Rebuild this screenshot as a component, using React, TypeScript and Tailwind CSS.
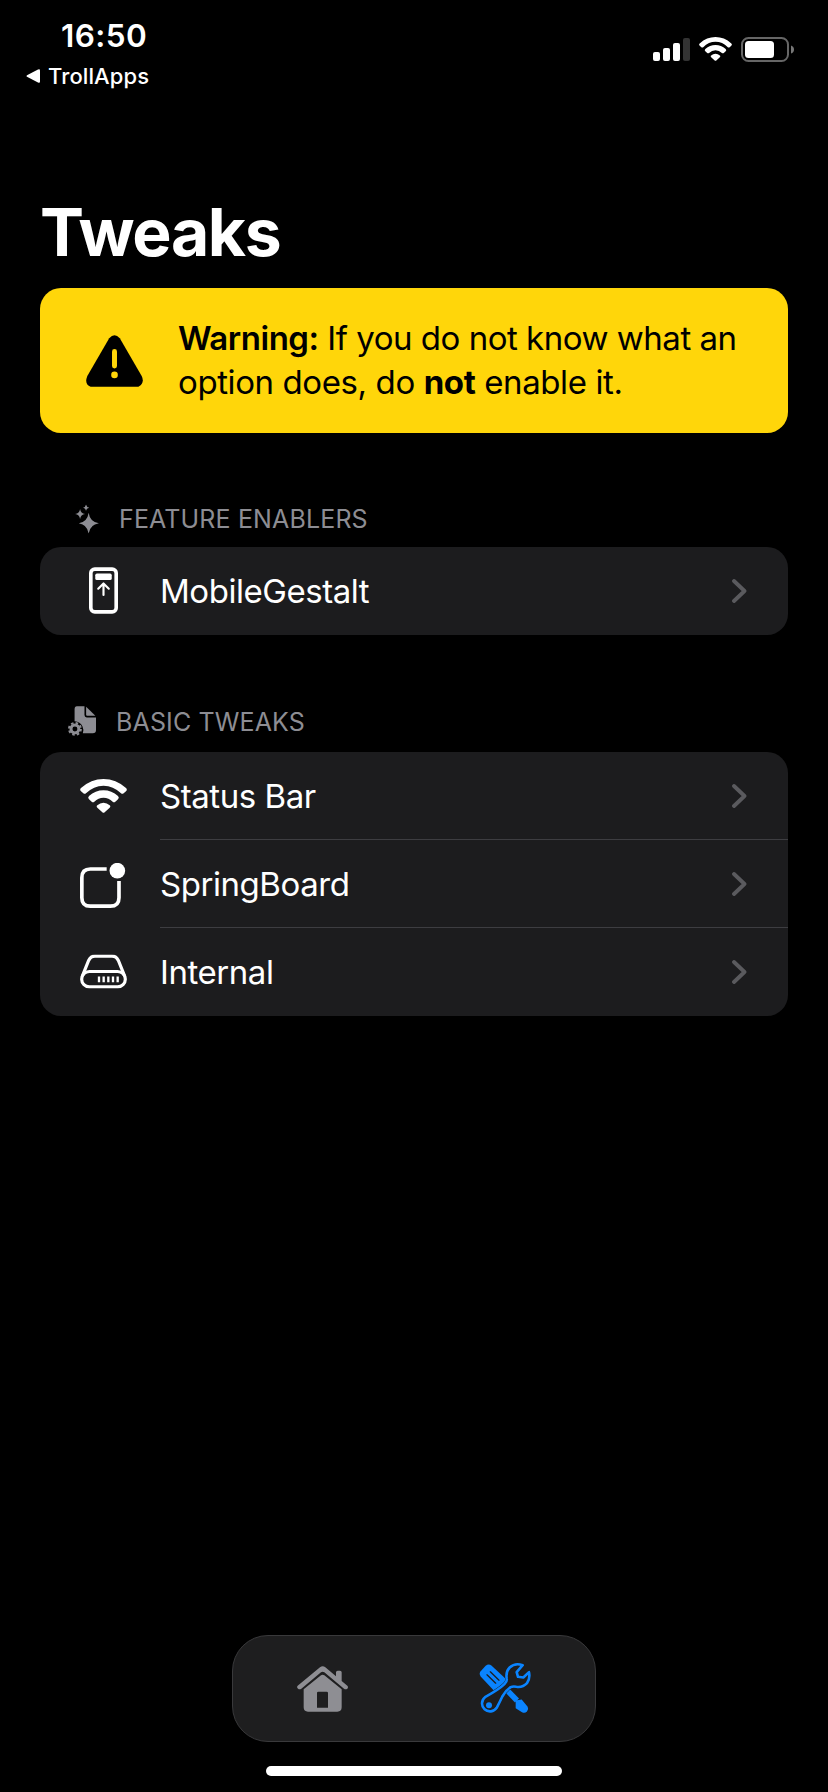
import type { ReactNode } from "react";

function WifiIcon({ className }: { className: string }) {
  return (
    <svg viewBox="0 0 141 102" className={className} fill="currentColor">
      <path d="M3 37Q-2 32 3 27Q33 0 70.500 0Q108 0 138 27Q143 32 138 37L131 43Q127 46 123 43Q100 20 70.500 20Q41 20 18 43Q14 46 10 43Z" />
      <path d="M27 61Q22 56 27 51Q46 34 70.500 34Q95 34 114 51Q119 56 114 61L106 68Q102 71 98 68Q86 56 70.500 56Q55 56 43 68Q39 71 35 68Z" />
      <path d="M52 86Q48 82 52 79Q60 71 70.500 71Q81 71 89 79Q93 82 89 86L74 100Q70.500 103 67 100Z" />
    </svg>
  );
}

function StatusBar() {
  return (
    <header className="flex h-[192px] justify-between pt-[18px] pr-[33px] pl-[26px]">
      <div>
        <div className="pl-[35px] text-[31.500px] leading-[36px] font-semibold tracking-[0.4px]">16:50</div>
        <div className="mt-[9px] flex items-center gap-[8px] text-[22px] leading-[26px] font-medium tracking-[0.1px]">
          <svg viewBox="0 0 14 14" className="size-[14px]" fill="currentColor">
            <path d="M1 6.200Q0 7 1 7.800L12 13.500Q14 14.500 14 12.500V1.500Q14-.5 12 .5Z" />
          </svg>
          TrollApps
        </div>
      </div>
      <div className="flex h-[26px] gap-[9px] pt-[19px]">
        <div className="flex h-[24px] items-end gap-[3px]">
          <i className="h-[9px] w-[7px] rounded-[2px] bg-white" />
          <i className="h-[13px] w-[7px] rounded-[2px] bg-white" />
          <i className="h-[18px] w-[7px] rounded-[2px] bg-white" />
          <i className="h-[23px] w-[7px] rounded-[2px] bg-[#333]" />
        </div>
        <WifiIcon className="h-[24px] w-[33px]" />
        <svg viewBox="0 0 54 26" className="h-[26px] w-[54px]">
          <rect x="1" y="1" width="46" height="23" rx="6.500" fill="none" stroke="#666" strokeWidth="2" />
          <rect x="4" y="4" width="29" height="17" rx="3.500" fill="#fff" />
          <path d="M50 8.500Q53 9.500 53 12.500T50 16.500Z" fill="#777" />
        </svg>
      </div>
    </header>
  );
}

function Section({ icon, title, children, className }: { icon: ReactNode; title: string; children: ReactNode; className: string }) {
  return (
    <section className={className}>
      <h2 className="flex h-[30px] items-center text-[25px] leading-[30px] font-normal text-[#8d8d93]">
        {icon}
        <span className="tracking-[0.140px]">{title}</span>
      </h2>
      {children}
    </section>
  );
}

function Row({ icon, label, last = false }: { icon: ReactNode; label: string; last?: boolean }) {
  return (
    <div className="flex h-[88px]">
      <div className="flex w-[120px] items-center pl-[40px]">
        <div className="flex w-[47px] justify-center">{icon}</div>
      </div>
      <div
        className={
          last
            ? "flex flex-1 items-center justify-between pr-[41px]"
            : "flex flex-1 items-center justify-between border-b border-[#3d3d41] pr-[41px]"
        }
      >
        <span className="text-[33px] leading-[44px] tracking-[-0.450px]">{label}</span>
        <svg viewBox="0 0 15 24" className="h-[24px] w-[15px]" fill="none" stroke="#5a5a5e" strokeWidth="3.800" strokeLinecap="round" strokeLinejoin="round">
          <path d="M2 2L12.500 12L2 22" />
        </svg>
      </div>
    </div>
  );
}

const sparkles = (
  <svg viewBox="0 0 72 88" className="mr-[20px] ml-[35px] h-[29px] w-[24px] -translate-y-[0.500px]" fill="currentColor">
    <path d="M41 25Q45 53 72 57Q45 61 41 88Q37 61 11 57Q37 53 41 25Z" />
    <path d="M15 14Q17 27 30 29Q17 31 15 44Q13 31 0 29Q13 27 15 14Z" />
    <path d="M33 0Q34.500 8 43 10Q34.500 12 33 19Q31.500 12 24 10Q31.500 8 33 0Z" />
  </svg>
);

const documentGear = (
  <svg viewBox="0 0 85 90" className="mr-[20px] ml-[28px] h-[30px] w-[28px] -translate-y-[1px]" fill="currentColor">
    <path d="M27 0H50V27Q50 34 57 34H85V72Q85 82 75 82H45Q49 73 44 62Q37 47 20 46V9Q20 0 27 0Z" />
    <path d="M55 2L83 29H58Q55 29 55 26Z" />
    <circle cx="21" cy="69" r="12" fill="none" stroke="currentColor" strokeWidth="9" />
    <circle cx="21" cy="69" r="18" fill="none" stroke="currentColor" strokeWidth="6" strokeDasharray="7.500 6.640" />
  </svg>
);

const phoneIcon = (
  <svg viewBox="0 0 88 141" className="h-[47px] w-[29px] -translate-y-[1px]" fill="none" stroke="currentColor" strokeLinecap="round" strokeLinejoin="round">
    <rect x="5.500" y="5.500" width="77" height="130" rx="12" strokeWidth="11" />
    <rect x="19" y="19" width="50" height="20" rx="5" fill="currentColor" stroke="none" />
    <path d="M44 84V50M28 65L44 49L60 65" strokeWidth="6.500" />
  </svg>
);

const badgeIcon = (
  <svg viewBox="0 0 141 136" className="h-[45.300px] w-[47px] translate-y-[2px]" fill="none" stroke="currentColor">
    <path d="M80 18H31Q5.500 18 5.500 44V104Q5.500 129.500 31 129.500H91Q117 129.500 117 104V54" strokeWidth="11" />
    <circle cx="112" cy="23" r="23.500" fill="currentColor" stroke="none" />
  </svg>
);

const driveIcon = (
  <svg viewBox="0 0 141 102" className="h-[34px] w-[47px] -translate-y-[0.500px]" fill="none" stroke="currentColor" strokeWidth="9.500">
    <rect x="5" y="51" width="131" height="46" rx="23" />
    <path d="M7 65L26 18Q32 5 45 5H96Q109 5 115 18L134 65" />
    <path d="M57 66V83M71 66V83M85 66V83M99 66V83M113 66V83" strokeWidth="7" />
  </svg>
);

function HomeIcon() {
  return (
    <svg viewBox="0 0 153 138" className="h-[46px] w-[51px]" fill="#8e8e93">
      <path d="M2 59L69 4Q77-2 85 4L117 31V19Q117 14 122 14H129Q134 14 134 19V45L151 59Q155 64 151 68Q146 72 141 68L82 19Q77 15 72 19L13 68Q8 72 3 68Q-2 64 2 59Z" />
      <path fillRule="evenodd" d="M20 70L72 28Q77 24 82 28L134 70V124Q134 137 121 137H33Q20 137 20 124ZM64 77Q60 77 60 81V125H93V81Q93 77 89 77Z" />
    </svg>
  );
}

const wrench =
  "M131 8Q108 0 92 15Q80 28 83 47Q85 57 77 64Q62 79 18 104A24 24 0 1 0 53 136Q62 119 70 102Q80 84 95 74Q102 71 112 73Q131 76 144 62Q154 49 150 29L133 45L117 43L113 29Z";

function ToolsIcon() {
  return (
    <svg viewBox="0 0 156 156" className="size-[52px] -translate-y-[0.500px]" fill="none" strokeLinejoin="round" strokeLinecap="round">
      <path d="M5 26L20 10Q29 2 38 10L88 56L50 90L5 42Q-1 34 5 26Z" fill="#0a84ff" />
      <path d="M24 37L50 62M34 28L60 53" stroke="#1e1e1f" strokeWidth="4" />
      <path d="M80 79L114 114" stroke="#0a84ff" strokeWidth="17" strokeLinecap="butt" />
      <path d="M110 114L128 111L146 133Q150 141 144 147Q137 154 129 149L110 137Z" fill="#0a84ff" />
      <path d={wrench} fill="#1e1e1f" stroke="#1e1e1f" strokeWidth="10" />
      <path d={wrench} stroke="#0a84ff" strokeWidth="7.800" />
      <circle cx="30" cy="128" r="9" fill="#0a84ff" />
    </svg>
  );
}

export default function App() {
  return (
    <div className="flex h-[1792px] w-[828px] flex-col overflow-hidden bg-black font-['Inter','Liberation_Sans',sans-serif] text-white">
      <StatusBar />
      <main className="flex-1 px-[40px]">
        <h1 className="text-[66px] leading-[80px] font-bold tracking-[-1.400px]">Tweaks</h1>
        <div className="mt-[16px] flex h-[145px] items-center rounded-[21px] bg-[#ffd60a] pb-[2px] pl-[46px] text-black">
          <svg viewBox="0 0 172 156" className="mt-[2px] mr-[35px] h-[52px] w-[57px]">
            <path d="M70 9Q86-9 102 9L168 123Q178 144 158 156H14Q-6 148 4 123Z" />
            <path d="M86 49V93" stroke="#ffd60a" strokeWidth="15" strokeLinecap="round" />
            <circle cx="86" cy="120" r="10" fill="#ffd60a" />
          </svg>
          <p className="text-[33px] leading-[44px] tracking-[-0.480px]">
            <b className="font-semibold">Warning:</b> If you do not know what an
            <br />
            <span className="tracking-[-0.400px]">
              option does, do <b className="font-bold">not</b> enable it.
            </span>
          </p>
        </div>

        <Section icon={sparkles} title="FEATURE ENABLERS" className="mt-[71px]">
          <div className="mt-[13px] rounded-[21px] bg-[#1c1c1e]">
            <Row icon={phoneIcon} label="MobileGestalt" last />
          </div>
        </Section>

        <Section icon={documentGear} title="BASIC TWEAKS" className="mt-[72px]">
          <div className="mt-[15px] rounded-[21px] bg-[#1c1c1e]">
            <Row icon={<WifiIcon className="h-[34px] w-[47px]" />} label="Status Bar" />
            <Row icon={badgeIcon} label="SpringBoard" />
            <Row icon={driveIcon} label="Internal" last />
          </div>
        </Section>
      </main>
      <nav className="mx-auto flex h-[107px] w-[364px] items-center justify-between rounded-[36px] border border-[#39393b] bg-[#1e1e1f] px-[64px]">
        <HomeIcon />
        <ToolsIcon />
      </nav>
      <div className="mx-auto mt-[24px] mb-[16px] h-[10px] w-[296px] rounded-full bg-white" />
    </div>
  );
}
